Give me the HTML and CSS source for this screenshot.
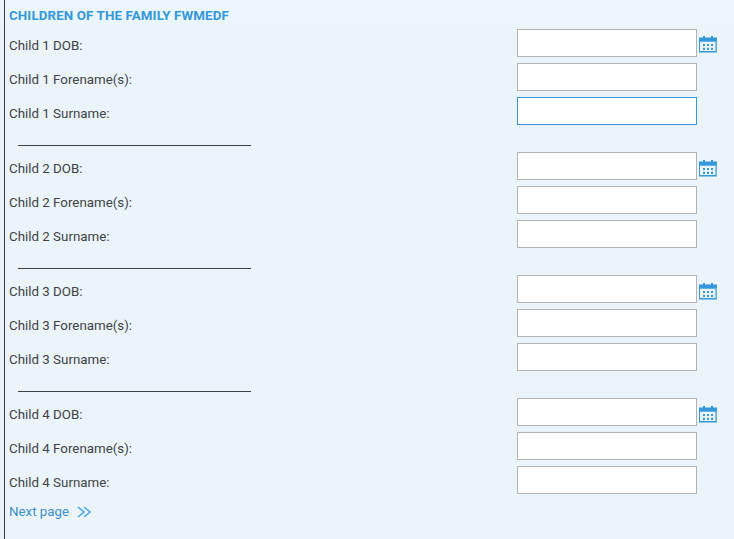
FILE: index.html
```html
<!DOCTYPE html>
<html lang="en">
<head>
<meta charset="utf-8">
<title>Children of the family</title>
<link rel="stylesheet" href="styles.css">
</head>
<body>
<svg class="sprite" aria-hidden="true">
  <symbol id="calendar" viewBox="0 0 18 17">
    <path fill="#8fc4ea" d="M0 1h18v1H0zM0 16h18v1H0zM16 6h1v9h-1z"/>
    <path fill="#3498db" d="M4 0h2v2H4zM12 0h2v2h-2zM0 2h18v3H0zM0 5h1v11H0zM1 15h16v1H1z"/>
    <path fill="#62afe3" d="M1 5h16v1H1zM17 5h1v11h-1z"/>
    <path fill="#3498db" d="M4 8h2v2H4zM8 8h2v2H8zM12 8h2v2h-2zM4 12h2v2H4zM8 12h2v2H8zM12 12h2v2h-2z"/>
    <path fill="#c5e0f5" d="M4 11h2v1H4zM8 11h2v1H8zM12 11h2v1h-2z"/>
  </symbol>
</svg>
<form class="panel">
  <h1 class="heading">CHILDREN OF THE FAMILY FWMEDF</h1>
  <section class="child">
    <div class="row"><label for="d1">Child 1 DOB:</label><input id="d1"><svg class="calendar first"><use href="#calendar"/></svg></div>
    <div class="row"><label for="f1">Child 1 Forename(s):</label><input id="f1"></div>
    <div class="row"><label for="s1">Child 1 Surname:</label><input id="s1" class="active"></div>
  </section>
  <hr class="rule">
  <section class="child">
    <div class="row"><label for="d2">Child 2 DOB:</label><input id="d2"><svg class="calendar"><use href="#calendar"/></svg></div>
    <div class="row"><label for="f2">Child 2 Forename(s):</label><input id="f2"></div>
    <div class="row"><label for="s2">Child 2 Surname:</label><input id="s2"></div>
  </section>
  <hr class="rule">
  <section class="child">
    <div class="row"><label for="d3">Child 3 DOB:</label><input id="d3"><svg class="calendar"><use href="#calendar"/></svg></div>
    <div class="row"><label for="f3">Child 3 Forename(s):</label><input id="f3"></div>
    <div class="row"><label for="s3">Child 3 Surname:</label><input id="s3"></div>
  </section>
  <hr class="rule">
  <section class="child">
    <div class="row"><label for="d4">Child 4 DOB:</label><input id="d4"><svg class="calendar"><use href="#calendar"/></svg></div>
    <div class="row"><label for="f4">Child 4 Forename(s):</label><input id="f4"></div>
    <div class="row"><label for="s4">Child 4 Surname:</label><input id="s4"></div>
  </section>
  <a class="next">Next page <svg class="chevrons" viewBox="0 0 14 12"><path d="M1 1l6 5-6 5M7 1l6 5-6 5"/></svg></a>
</form>
</body>
</html>
```
FILE: styles.css
```css
* { box-sizing: border-box; }
body {
  margin: 0;
  background: #ebf4fb;
  color: #3f4346;
  font: 13.333px/18px Roboto, sans-serif;
}
.sprite { display: none; }
.panel {
  height: 539px;
  margin-left: 4px;
  border-left: 1px solid #3d3d3d;
  overflow: hidden;
}
.heading {
  height: 26px;
  margin: 0;
  padding: 7px 0 0 4px;
  background: #eaf5fc;
  color: #3498db;
  font-size: 13.333px;
  font-weight: 700;
  line-height: 18px;
  letter-spacing: 0.12px;
}
.row {
  display: grid;
  grid-template-columns: 508px 180px 18px;
  align-items: center;
  height: 34px;
  padding-left: 4px;
}
.row label { padding-top: 5px; }
.row input {
  width: 180px;
  height: 28px;
  padding: 0 6px;
  border: 1px solid #b3b3b3;
  background: #fff;
  outline: none;
}
.row .active { border-color: #3498db; }
.calendar {
  width: 18px;
  height: 17px;
  margin: 5px 0 0 2px;
}
.calendar.first { margin-top: 3px; }
.rule {
  width: 233px;
  height: 1px;
  margin: 17px 0 3px 13px;
  border: 0;
  background: #3f4346;
}
.next {
  display: flex;
  align-items: center;
  padding: 6px 0 0 4px;
  color: #3d8fcc;
}
.chevrons {
  width: 14px;
  height: 12px;
  margin: 0 0 0 8px;
  fill: none;
  stroke: #4fa6e0;
  stroke-width: 1.6;
}
```
